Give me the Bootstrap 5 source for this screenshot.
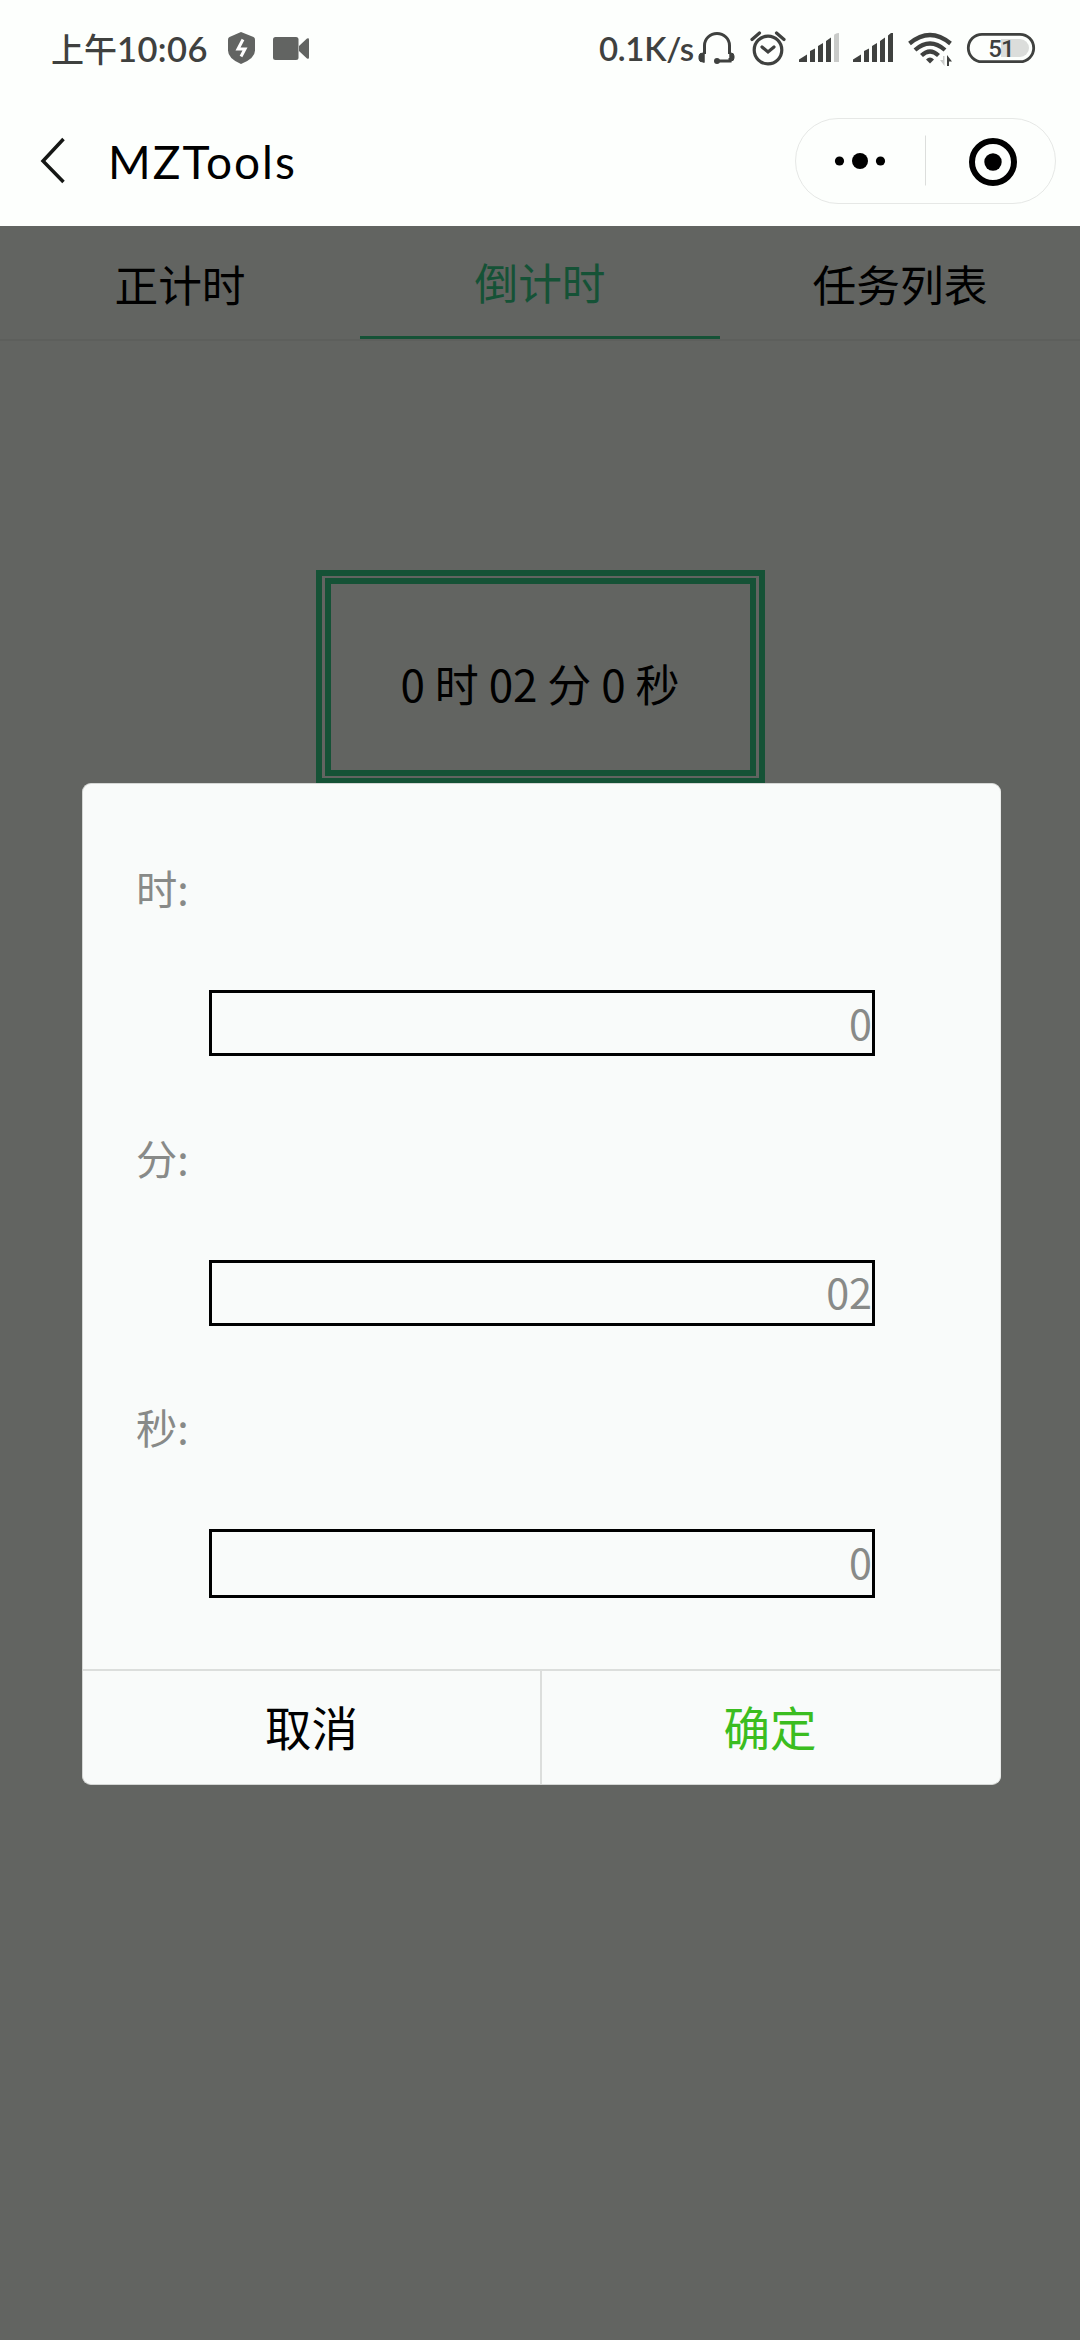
<!DOCTYPE html>
<html lang="zh-CN">
<head>
<meta charset="utf-8">
<meta name="viewport" content="width=device-width, initial-scale=1">
<title>MZTools</title>
<link rel="stylesheet" href="https://cdn.jsdelivr.net/npm/bootstrap@5.3.0/dist/css/bootstrap.min.css">
<style>
  body { font-family: Lato, "Noto Sans CJK SC", sans-serif; background: #626461; color: #000; width: 1080px; height: 2340px; overflow: hidden; }
  svg { display: block; flex: none; }
  .cjk { font-family: "Noto Sans CJK SC", sans-serif; }
  .top-area { background: #fdfffd; height: 226px; }
  .status-bar { height: 96px; padding: 10px 0 6px 51px; color: #3f413f; }
  .clock { width: 176px; font-size: 33px; font-weight: 500; line-height: 77px; white-space: nowrap; }
  .clock b { font: 600 34.5px/1 Lato, sans-serif; letter-spacing: .4px; }
  .speed { width: 98px; font: 600 33px/77px Lato, sans-serif; letter-spacing: -.3px; white-space: nowrap; }
  .title-bar { height: 130px; padding: 0 24px 0 40px; }
  .title-text { font-size: 46px; margin-left: 41px; line-height: 130px; padding-top: 1px; letter-spacing: 2px; }
  .capsule { width: 261px; height: 86px; border: 1px solid #e6e8e6; border-radius: 43px; }
  .tab-strip { height: 115px; border-bottom: 2px solid #5d5f5c; font-size: 43.7px; }
  .tab-strip .nav-link { color: #000; padding: 0; line-height: 115px; height: 113px; }
  .tab-strip .nav-link.active { color: #155236; border-bottom: 3px solid #155236; line-height: 110px; }
  .timer-frame { width: 449px; height: 214px; margin-top: 229px; border: 6px solid #155236; padding: 2px 3px; }
  .timer-inner { border: 6px solid #155236; font-size: 44px; color: #000; padding-top: 12px; white-space: pre; }
  .dialog-box { left: 82px; top: 783px; width: 919px; height: 1002px; background: #f9fbfa; border-radius: 9px; border: 1px solid #d5d7d5; border-right-color: #e8eae8; }
  .dialog-main { height: 885px; padding: 67px 0 0 53px; color: #888a88; }
  .field-group { height: 269.5px; font-size: 41.3px; }
  .field-group label { display: block; line-height: 73px; height: 139px; }
  .time-input { width: 666px; height: 66px; margin-left: 73px; border: 3px solid #000; background: transparent; color: #888a88; text-align: right; padding: 0 0 3px; font-size: 41.3px; border-radius: 0; display: block; outline: 0; }
  .field-group:last-child .time-input { height: 69px; padding-bottom: 5px; }
  .dialog-actions { height: 115px; border-top: 2px solid #dcdedc; }
  .dialog-actions .btn { flex: 1 1 0; border: 0; border-radius: 0; font-size: 46.5px; padding: 0 0 3px; color: #000; }
  .dialog-actions .btn:first-child { flex: 0 0 457px; }
  .dialog-actions .btn + .btn { border-left: 2px solid #dcdedc; color: #3bbd20; padding-right: 2px; }
</style>
</head>
<body>
<header class="top-area">
  <div class="status-bar d-flex">
    <div class="clock cjk">上午<b>10:06</b></div>
    <svg width="46" height="80" viewBox="227 10 46 80"><path d="M241 32l12.500 5q1.500.700 1.500 2.500v11q0 8-14 13.500-13-5.500-13-13.500v-11q0-1.800 1.500-2.500z" fill="#626462"/><path d="M243 39.500l-5 9.500h7l-4 7.500" fill="none" stroke="#fff" stroke-width="3"/></svg>
    <svg width="326" height="80" viewBox="273 10 326 80" fill="#626462"><rect x="273" y="37" width="25.500" height="23" rx="2.500"/><path d="M299 46l8-7.500q2-1 2 1V57.500q0 2-2 1L299 51z"/></svg>
    <div class="speed">0.1K/s</div>
    <svg width="45" height="80" viewBox="697 10 45 80" fill="none" stroke="#3f413f" stroke-width="3"><path d="M704.500 54V45.500a12.500 12 0 0 1 25 0V54M730 58v3H718"/><path d="M704 53v9h-1q-4 0-4-3v-3q0-3 4-3zM730 53v8h1q3 0 3-3v-2q0-3-3-3zM704 52v11M730 52v9" fill="#3f413f" stroke-width="1"/><circle cx="717" cy="61" r="3" fill="#3f413f" stroke="none"/></svg>
    <svg width="53" height="80" viewBox="742 10 53 80" fill="none" stroke="#3f413f" stroke-width="3.200"><circle cx="768" cy="50" r="13.800"/><path d="M762 47l6 5 6-5M752 39.500l7.500-6.500M784 39.500l-7.500-6.500" stroke-linecap="round"/></svg>
    <svg width="54" height="80" viewBox="795 10 54 80" fill="#3f413f"><path d="M799 62v-2.500l8-5V62zM810 62V51l5-2.500V62zM818 62V46l5-3V62zM826 62V41l5-3.500V62z"/><path d="M834 62V35.500q0-2 5-2.500V62z" fill="#c9cbc9"/></svg>
    <svg width="54" height="80" viewBox="849 10 54 80" fill="#3f413f"><path d="M853 62v-2.500l8-5V62zM864 62V51l5-2.500V62zM872 62V46l5-3V62zM880 62V41l5-3.500V62zM888 62V35.500l3-2.500h2V62z"/></svg>
    <svg width="61" height="80" viewBox="903 10 61 80" fill="none" stroke="#3f413f" stroke-width="4.300"><path d="M909.500 43.500q20.500-17 41 0M915 50q15-13 30 0M921.500 55.500q8.500-8 17 0"/><path d="M926 59.500q4-4 8 0l-4 4z" fill="#3f413f" stroke="none"/><path d="M944.500 56v10l-4.500-6h3v-4z" fill="#c9cbc9" stroke="none"/><path d="M947 66V55l5 6.500h-3V66z" fill="#3f413f" stroke="none"/></svg>
    <svg width="75" height="80" viewBox="964 10 75 80"><rect x="968.300" y="34.300" width="65.400" height="27.400" rx="13.700" fill="none" stroke="#3f413f" stroke-width="2.800"/><path d="M1001 39h19a9 9 0 0 1 0 18h-19z" fill="#dbdddb"/><text x="1001" y="56.500" text-anchor="middle" font-family="Roboto, sans-serif" font-weight="500" font-size="24" letter-spacing="-1" fill="#3f413f">51</text></svg>
  </div>
  <div class="title-bar d-flex align-items-center">
    <svg width="27" height="48" viewBox="0 0 27 48"><path d="M23.500 3L3 25l20.500 21" transform="translate(0 -1)" fill="none" stroke="#151715" stroke-width="3.500"/></svg>
    <div class="title-text">MZTools</div>
    <div class="capsule ms-auto">
      <svg width="259" height="84" viewBox="796 119 259 84"><g fill="#000"><circle cx="839.500" cy="161" r="4.600"/><circle cx="860" cy="161" r="8"/><circle cx="880.500" cy="161" r="4.600"/><circle cx="993" cy="162" r="8.700"/></g><path d="M925.500 135.500v50" stroke="#dcdedc"/><circle cx="993" cy="162" r="21" fill="none" stroke="#000" stroke-width="6"/></svg>
    </div>
  </div>
</header>
<main class="cjk">
  <nav class="nav nav-fill tab-strip flex-nowrap">
    <a class="nav-link w-100">正计时</a>
    <a class="nav-link w-100 active">倒计时</a>
    <a class="nav-link w-100">任务列表</a>
  </nav>
  <div class="timer-frame mx-auto"><div class="timer-inner h-100 d-flex align-items-center justify-content-center">0 时 02 分 0 秒</div></div>
</main>
<section class="dialog-box cjk position-absolute" role="dialog">
  <form class="dialog-main">
    <div class="field-group"><label for="hours">时:</label><input class="time-input cjk" id="hours" value="0"></div>
    <div class="field-group"><label for="minutes">分:</label><input class="time-input cjk" id="minutes" value="02"></div>
    <div class="field-group"><label for="seconds">秒:</label><input class="time-input cjk" id="seconds" value="0"></div>
  </form>
  <div class="dialog-actions d-flex">
    <button class="btn" type="button">取消</button>
    <button class="btn" type="button">确定</button>
  </div>
</section>
<script src="https://cdn.jsdelivr.net/npm/bootstrap@5.3.0/dist/js/bootstrap.bundle.min.js"></script>
</body>
</html>
